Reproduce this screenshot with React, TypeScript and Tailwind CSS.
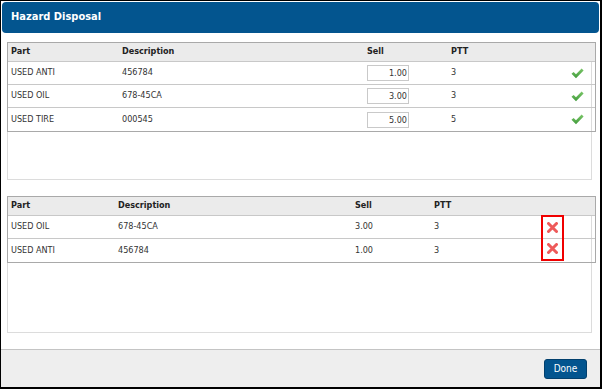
import React from 'react';

type Row = { part: string; desc: string; sell: string; ptt: string };

const available: Row[] = [
    { part: 'USED ANTI', desc: '456784', sell: '1.00', ptt: '3' },
    { part: 'USED OIL', desc: '678-45CA', sell: '3.00', ptt: '3' },
    { part: 'USED TIRE', desc: '000545', sell: '5.00', ptt: '5' },
];

const selected: Row[] = [
    { part: 'USED OIL', desc: '678-45CA', sell: '3.00', ptt: '3' },
    { part: 'USED ANTI', desc: '456784', sell: '1.00', ptt: '3' },
];

const CheckIcon = () => (
    <svg width="13" height="11" viewBox="0 0 13 11">
        <defs>
            <linearGradient id="chk" x1="0" y1="0" x2="0" y2="1">
                <stop offset="0" stopColor="#7cc76a" />
                <stop offset="1" stopColor="#3f9a3a" />
            </linearGradient>
        </defs>
        <path d="M0.5 5.8 L2.6 3.9 L5 6.2 L10.6 0.5 L12.6 2.4 L5 10.3 Z" fill="url(#chk)" />
    </svg>
);

const XIcon = () => (
    <svg width="11" height="11" viewBox="0 0 11 11">
        <path d="M1.5 1.5 L9.5 9.5 M9.5 1.5 L1.5 9.5" stroke="#ee5a5a" strokeWidth="3" strokeLinecap="round" />
    </svg>
);

export default function App() {
    return (
        <div
            className="w-[602px] h-[389px] bg-white border-l border-t border-r-2 border-b-2 border-black flex flex-col text-[#333]"
            style={{ fontFamily: '"DejaVu Sans Condensed", Tahoma, "Liberation Sans", sans-serif' }}
        >
            <div className="flex-1 flex flex-col p-px">
                {/* Title */}
                <div className="h-[31px] bg-[#03558f] rounded-[4px] flex items-center px-[9px]">
                    <span className="text-white font-bold text-[11px]">Hazard Disposal</span>
                </div>

                {/* Available parts */}
                <div className="pl-[5px] pr-[7px] pt-[9px]">
                    <div className="h-[138px] border border-[#dcdcdc]">
                        <div className="w-[589px] -mt-px -ml-px border border-[#a9a9a9] text-[9px]">
                            <div className="grid grid-cols-[111px_245px_84px_1fr_24px] h-[19px] items-center bg-[#ebebeb] border-b border-[#c8c8c8] font-bold text-[#222]">
                                <span className="pl-[3px]">Part</span>
                                <span className="pl-[3px]">Description</span>
                                <span className="pl-[3px]">Sell</span>
                                <span className="pl-[3px]">PTT</span>
                                <span />
                            </div>
                            {available.map((r, i) => (
                                <div
                                    key={r.part}
                                    className={`grid grid-cols-[111px_245px_84px_1fr_24px] h-[23px] items-center ${i < available.length - 1 ? 'border-b border-[#c8c8c8]' : ''}`}
                                >
                                    <span className="pl-[3px]">{r.part}</span>
                                    <span className="pl-[3px]">{r.desc}</span>
                                    <span className="pl-[3px]">
                                        <span className="block w-[42px] h-[16px] border border-[#c9c9c9] text-right pr-[1px] leading-[14px]">{r.sell}</span>
                                    </span>
                                    <span className="pl-[3px]">{r.ptt}</span>
                                    <span className="flex items-center">
                                        <CheckIcon />
                                    </span>
                                </div>
                            ))}
                        </div>
                    </div>
                </div>

                {/* Selected parts */}
                <div className="pl-[5px] pr-[7px] pt-[16px]">
                    <div className="h-[137px] border border-[#dcdcdc]">
                        <div className="w-[589px] -mt-px -ml-px border border-[#a9a9a9] text-[9px]">
                            <div className="grid grid-cols-[107px_237px_79px_1fr_36px] h-[19px] items-center bg-[#ebebeb] border-b border-[#c8c8c8] font-bold text-[#222]">
                                <span className="pl-[3px]">Part</span>
                                <span className="pl-[3px]">Description</span>
                                <span className="pl-[3px]">Sell</span>
                                <span className="pl-[3px]">PTT</span>
                                <span />
                            </div>
                            <div className="relative">
                                {selected.map((r, i) => (
                                    <div
                                        key={r.part}
                                        className={`grid grid-cols-[107px_237px_79px_1fr_36px] h-[23px] items-center ${i < selected.length - 1 ? 'border-b border-[#c8c8c8]' : ''}`}
                                    >
                                        <span className="pl-[3px]">{r.part}</span>
                                        <span className="pl-[3px]">{r.desc}</span>
                                        <span className="pl-[3px]">{r.sell}</span>
                                        <span className="pl-[3px]">{r.ptt}</span>
                                        <span />
                                    </div>
                                ))}
                                {/* highlight around remove buttons */}
                                <div className="absolute left-[533px] top-[-1px] w-[23px] h-[46px] border-2 border-[#f00000] flex flex-col items-center justify-around">
                                    <XIcon />
                                    <XIcon />
                                </div>
                            </div>
                        </div>
                    </div>
                </div>

                <div className="flex-1" />

                {/* Footer */}
                <div className="h-[38px] -mx-px -mb-px bg-[#eeeeee] border-t border-[#c4c4c4] flex items-center justify-end pr-[13px]">
                    <button className="w-[43px] h-[20px] bg-[#03558f] border border-[#02406d] rounded-[3px] text-white text-[10px]">
                        Done
                    </button>
                </div>
            </div>
        </div>
    );
}
